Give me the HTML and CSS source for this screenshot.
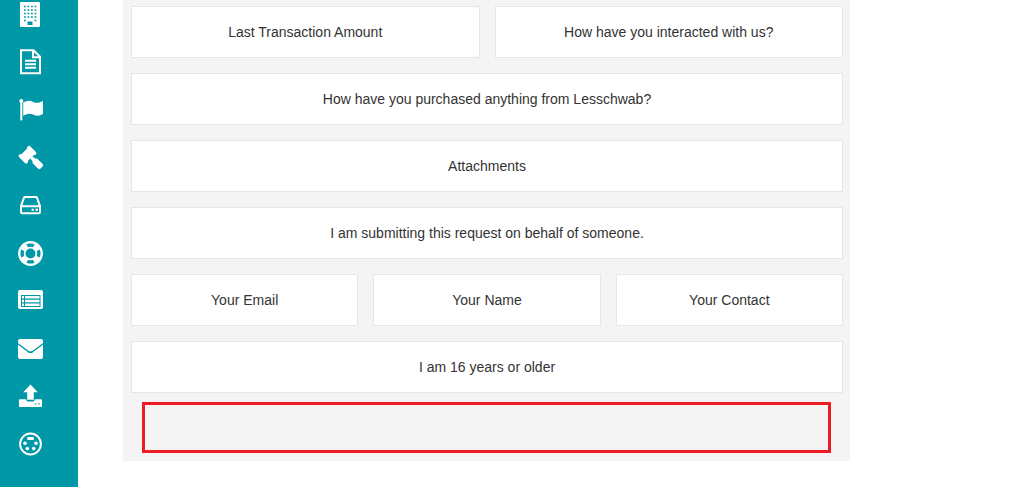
FILE: index.html
```
<!DOCTYPE html>
<html lang="en">
<head>
  <meta charset="UTF-8">
  <meta name="viewport" content="width=device-width, initial-scale=1.0">
  <title>Form Layout</title>
  <link rel="stylesheet" href="styles.css">
</head>
<body>
  <nav class="sidebar" aria-label="Main menu">
    <a href="#" aria-label="Organization">
      <svg viewBox="0 0 28 28">
        <path d="M5 2h18a1 1 0 0 1 1 1v23a1 1 0 0 1-1 1H5a1 1 0 0 1-1-1V3a1 1 0 0 1 1-1z"/>
        <path class="line" stroke-width="1.4" stroke-dasharray="1.8 1.7" d="M8 6.5h12.5M8 10h12.5M8 13.5h12.5M8 17h12.5M8 20.5h1.8M18.5 20.5h1.8"/>
        <path class="cut" d="M11.5 21.5h5V25h-5z"/>
      </svg>
    </a>
    <a href="#" aria-label="Documents">
      <svg viewBox="0 0 28 28">
        <path class="stroke" d="M5 2.2h12.5l6.5 6.5v16.5H5zM17 2.5v6.8h7"/>
        <path class="stroke" d="M9 12.8h11M9 16.3h11M9 19.8h11"/>
      </svg>
    </a>
    <a href="#" aria-label="Flags">
      <svg viewBox="0 0 28 28">
        <circle cx="5.3" cy="5" r="2"/>
        <path d="M4.3 5h2v19.4h-2z"/>
        <path d="M7.2 6.8c4-2.2 6.8-2.6 10-.9 3 1.6 5.2.9 9.8-1v12.8c-3.6 2.2-6.4 2.7-9.4 1.1-3.4-1.7-6.2-1.2-10.4 1z"/>
      </svg>
    </a>
    <a href="#" aria-label="Rules">
      <svg viewBox="0 0 28 28">
        <path d="M11.7 3.5q1.2-1.4 2.5-.2l5.7 5.7q1.2 1.300 0 2.500-1 1-2.200.6l-5.700 5.700q.5 1.200-.6 2.200-1.200 1.200-2.500 0L3.200 14.300q-1.200-1.300 0-2.500 1-1 2.200-.6l5.700-5.700q-.4-1.100.6-2z"/>
        <path d="M14 15.300l2.400-2.400 2.800 2.800q1.300-.8 2.400.3l5 5q1.100 1.300 0 2.600l-2 2q-1.300 1.100-2.600 0l-5-5q-1.100-1.100-.3-2.400z"/>
      </svg>
    </a>
    <a href="#" aria-label="Storage">
      <svg viewBox="0 0 28 28">
        <path class="stroke" d="M5 15.2l3-8.500q.3-.7 1.200-.7h10.600q.9 0 1.200.7l3 8.500V21q0 1.200-1.200 1.200H6.200Q5 22.200 5 21zM5 15.200h19"/>
        <circle cx="16.7" cy="18.700" r="1.300"/>
        <circle cx="20.700" cy="18.700" r="1.300"/>
      </svg>
    </a>
    <a href="#" aria-label="Support">
      <svg viewBox="0 0 28 28">
        <circle cx="14.5" cy="14.5" r="12.4"/>
        <circle class="cut" cx="14.5" cy="14.5" r="5"/>
        <path class="cut" d="M10.500 5.300q4-1.700 8 0l-1.500 3q-2.500-1-5 0zM10.500 23.700q4 1.700 8 0l-1.500-3q-2.500 1-5 0zM5.300 10.500q-1.700 4 0 8l3-1.500q-1-2.500 0-5zM23.700 10.500q1.700 4 0 8l-3-1.500q1-2.500 0-5z"/>
      </svg>
    </a>
    <a href="#" aria-label="Forms">
      <svg viewBox="0 0 28 28">
        <rect x="2" y="3" width="25" height="19" rx="1.8"/>
        <path class="cut" d="M5 8h19.500v12H5z"/>
        <path d="M6 9h2v2.500H6zM9 9h14.500v2.500H9zM6 12.700h2v2.500H6zM9 12.700h14.500v2.500H9zM6 16.400h2v2.500H6zM9 16.400h14.500v2.500H9z"/>
      </svg>
    </a>
    <a href="#" aria-label="Mail">
      <svg viewBox="0 0 28 28">
        <rect x="2" y="5" width="25" height="20" rx="2"/>
        <path class="line" stroke-width="1.500" d="M1.500 9.500l10.700 8q2.300 1.500 4.600 0l10.700-8"/>
      </svg>
    </a>
    <a href="#" aria-label="Upload">
      <svg viewBox="0 0 28 28">
        <path d="M14.500 2.500l7.300 7.800h-4v7.500h-6.600v-7.500h-4z"/>
        <path d="M4 17.300h6.300v.7q.3 1.400 1.700 1.400h5q1.400 0 1.700-1.400v-.7H25q1 0 1 1V24q0 1-1 1H4q-1 0-1-1v-5.700q0-1 1-1z"/>
        <circle class="cut" cx="19.800" cy="22" r=".8"/>
        <circle class="cut" cx="23" cy="22" r=".8"/>
      </svg>
    </a>
    <a href="#" aria-label="Connections">
      <svg viewBox="0 0 28 28">
        <circle class="stroke" cx="14.500" cy="14" r="10.400"/>
        <rect x="11.200" y="7" width="6.600" height="3" rx=".8"/>
        <circle cx="9" cy="13.300" r="1.800"/>
        <circle cx="20" cy="13.300" r="1.800"/>
        <circle cx="11.300" cy="18.600" r="1.800"/>
        <circle cx="17.700" cy="18.600" r="1.800"/>
      </svg>
    </a>
  </nav>

  <main class="content">
    <div class="panel">
      <div class="row">
        <div class="field">Last Transaction Amount</div>
        <div class="field">How have you interacted with us?</div>
      </div>
      <div class="row">
        <div class="field">How have you purchased anything from Lesschwab?</div>
      </div>
      <div class="row">
        <div class="field">Attachments</div>
      </div>
      <div class="row">
        <div class="field">I am submitting this request on behalf of someone.</div>
      </div>
      <div class="row">
        <div class="field">Your Email</div>
        <div class="field">Your Name</div>
        <div class="field">Your Contact</div>
      </div>
      <div class="row">
        <div class="field">I am 16 years or older</div>
      </div>
      <div class="drop-zone"></div>
    </div>
  </main>
</body>
</html>
```
FILE: styles.css
```
* {
  box-sizing: border-box;
}

body {
  display: flex;
  min-height: 100vh;
  margin: 0;
  background-color: #fff;
  color: #333;
  font-family: "Liberation Sans", Arial, sans-serif;
  font-size: 14px;
  line-height: 20px;
}

.sidebar {
  display: flex;
  flex-direction: column;
  justify-content: space-between;
  flex: none;
  width: 78px;
  padding: 0 16px 29px;
  background-color: #0097a7;
}

.sidebar a {
  display: block;
  width: 28px;
  height: 28px;
}

.sidebar svg {
  display: block;
  width: 28px;
  height: 28px;
  fill: #fff;
}

.sidebar .stroke {
  fill: none;
  stroke: #fff;
  stroke-width: 2;
}

/* teal details cut out of the white shapes */
.sidebar .cut {
  fill: #0097a7;
}

.sidebar .line {
  fill: none;
  stroke: #0097a7;
}

.content {
  flex: 1;
  padding: 0 172px 26px 45px;
}

.panel {
  padding: 6px 7px 8px 8px;
  background-color: #f4f4f4;
}

.row {
  display: flex;
  gap: 15px;
}

.row + .row {
  margin-top: 15px;
}

.field {
  flex: 1;
  padding: 15px;
  border: 1px solid #e6e6e6;
  background-color: #fff;
  text-align: center;
}

.drop-zone {
  height: 51px;
  margin: 9px 12px 0 11px;
  border: 3px solid #ed1c24;
}
```
